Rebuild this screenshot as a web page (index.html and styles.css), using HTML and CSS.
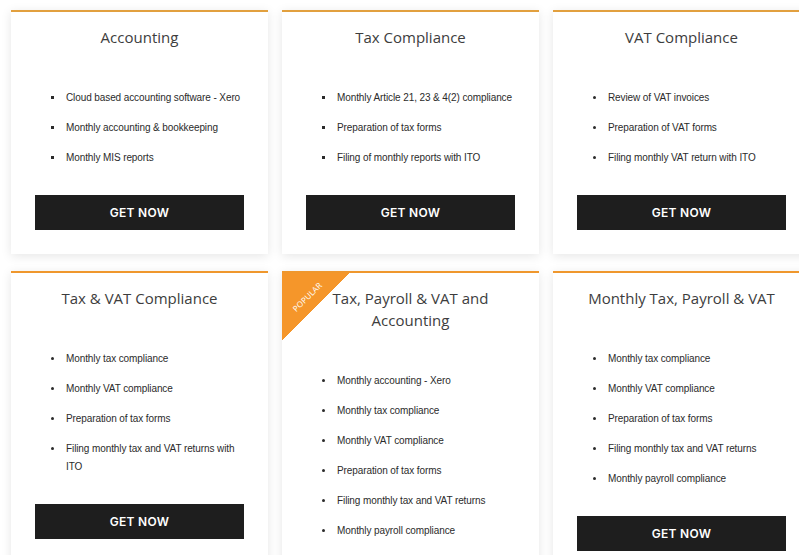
FILE: index.html
```html
<!DOCTYPE html>
<html lang="en">

<head>
    <meta charset="UTF-8">
    <title>Pricing</title>
    <link rel="stylesheet" href="styles.css">
</head>

<body>
    <div class="plans">
        <div class="plan">
            <h3>Accounting</h3>
            <ul class="square">
                <li>Cloud based accounting software - Xero</li>
                <li>Monthly accounting &amp; bookkeeping</li>
                <li>Monthly MIS reports</li>
            </ul>
            <a class="btn" href="#">GET NOW</a>
        </div>
        <div class="plan">
            <h3>Tax Compliance</h3>
            <ul class="square">
                <li>Monthly Article 21, 23 &amp; 4(2) compliance</li>
                <li>Preparation of tax forms</li>
                <li>Filing of monthly reports with ITO</li>
            </ul>
            <a class="btn" href="#">GET NOW</a>
        </div>
        <div class="plan">
            <h3>VAT Compliance</h3>
            <ul>
                <li>Review of VAT invoices</li>
                <li>Preparation of VAT forms</li>
                <li>Filing monthly VAT return with ITO</li>
            </ul>
            <a class="btn" href="#">GET NOW</a>
        </div>
        <div class="plan low">
            <h3>Tax &amp; VAT Compliance</h3>
            <ul>
                <li>Monthly tax compliance</li>
                <li>Monthly VAT compliance</li>
                <li>Preparation of tax forms</li>
                <li>Filing monthly tax and VAT returns with ITO</li>
            </ul>
            <a class="btn" href="#">GET NOW</a>
        </div>
        <div class="plan low popular">
            <div class="ribbon"><span>POPULAR</span></div>
            <h3>Tax, Payroll &amp; VAT and Accounting</h3>
            <ul>
                <li>Monthly accounting - Xero</li>
                <li>Monthly tax compliance</li>
                <li>Monthly VAT compliance</li>
                <li>Preparation of tax forms</li>
                <li>Filing monthly tax and VAT returns</li>
                <li>Monthly payroll compliance</li>
            </ul>
            <a class="btn" href="#">GET NOW</a>
        </div>
        <div class="plan low">
            <h3>Monthly Tax, Payroll &amp; VAT</h3>
            <ul>
                <li>Monthly tax compliance</li>
                <li>Monthly VAT compliance</li>
                <li>Preparation of tax forms</li>
                <li>Filing monthly tax and VAT returns</li>
                <li>Monthly payroll compliance</li>
            </ul>
            <a class="btn" href="#">GET NOW</a>
        </div>
    </div>
</body>

</html>
```

FILE: styles.css
```css
* {
    margin: 0;
    padding: 0;
    box-sizing: border-box;
}

html,
body {
    overflow: hidden;
    background: #fff;
}

.plans {
    display: grid;
    grid-template-columns: repeat(3, 257px);
    column-gap: 14px;
    row-gap: 17px;
    padding: 10px 0 0 11px;
    width: 830px;
}

.plan {
    position: relative;
    background: #fff;
    border-top: 2px solid #e2a03f;
    box-shadow: 0 2px 10px rgba(0, 0, 0, 0.1);
    padding: 14px 24px 24px;
    overflow: hidden;
}

.plan.low {
    border-top-color: #ef972d;
}

.plan h3 {
    font: 400 15px/22px "Open Sans", sans-serif;
    color: #3d3d3d;
    text-align: center;
}

.plan ul {
    margin: 41px -8px 0 0;
    padding-left: 29px;
    list-style: disc;
    font: 10px/18px "Liberation Sans", Arial, sans-serif;
    letter-spacing: -0.1px;
    color: #2b2b2b;
}

.plan ul.square {
    list-style: square;
}

.plan li {
    margin-bottom: 12px;
    padding-left: 2px;
}

.low li {
    margin-right: 14px;
}

.btn {
    display: block;
    margin-top: 28px;
    height: 35px;
    background: #1e1e1e;
    color: #fff;
    text-align: center;
    text-decoration: none;
    font: 600 12px/35px Inter, sans-serif;
    letter-spacing: 0.3px;
}

.ribbon {
    position: absolute;
    top: 0;
    left: 0;
    width: 68px;
    height: 68px;
    background: linear-gradient(135deg, #f5962a 50%, transparent 50%);
}

.ribbon span {
    position: absolute;
    left: 1px;
    top: 19px;
    width: 48px;
    transform: rotate(-45deg);
    text-align: center;
    font: 8px/9px "Open Sans", sans-serif;
    color: #fff;
    letter-spacing: 0.2px;
}
```
